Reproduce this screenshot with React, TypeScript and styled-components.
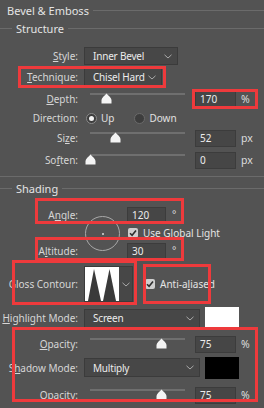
import styled, { createGlobalStyle } from "styled-components";

const GlobalStyle = createGlobalStyle`
  html, body {
    margin: 0;
    padding: 0;
    background: #535353;
  }

  body {
    font-family: "Noto Sans", "Segoe UI", sans-serif;
    font-size: 10px;
    color: #d6d6d6;
  }
`;

const Panel = styled.div`
  position: relative;
  width: 264px;
  height: 408px;
  overflow: hidden;
  background: #535353;
`;

const Legend = styled.div<{ $indent: number; $h: number }>`
  display: flex;
  align-items: center;
  gap: 4px;
  height: ${(p) => p.$h}px;
  padding-left: ${(p) => (p.$indent ? 0 : 7)}px;
  font-size: 11px;
  color: #e4e4e4;

  &::before {
    content: "";
    display: ${(p) => (p.$indent ? "block" : "none")};
    width: ${(p) => p.$indent}px;
    height: 1px;
    background: #6b6b6b;
  }

  &::after {
    content: "";
    flex: 1;
    height: 1px;
    background: #6b6b6b;
  }
`;

const Group = styled.div`
  padding-bottom: 6px;
  border-bottom: 1px solid #6b6b6b;
`;

const Row = styled.div<{ $h: number; $mt?: number }>`
  display: grid;
  grid-template-columns: 78px auto;
  column-gap: 6px;
  align-items: center;
  height: ${(p) => p.$h}px;
  margin-top: ${(p) => p.$mt ?? 0}px;
`;

const Label = styled.span<{ $row?: number }>`
  grid-column: 1;
  grid-row: ${(p) => p.$row ?? "auto"};
  text-align: right;
  white-space: nowrap;
`;

const U = styled.span`
  text-decoration: underline;
  text-underline-offset: 1px;
`;

const Controls = styled.div`
  display: flex;
  align-items: center;
`;

const Select = styled.div<{ $w: number; $h?: number }>`
  box-sizing: border-box;
  display: flex;
  align-items: center;
  justify-content: space-between;
  width: ${(p) => p.$w}px;
  height: ${(p) => p.$h ?? 18}px;
  padding: 0 5px 0 8px;
  background: #474747;
  border: 1px solid #3b3b3b;
  color: #ececec;
  font-size: 10px;
  letter-spacing: -0.2px;
  white-space: nowrap;
`;

const Field = styled.div<{ $w?: number; $col?: number; $row?: number }>`
  box-sizing: border-box;
  display: flex;
  align-items: center;
  grid-column: ${(p) => p.$col ?? "auto"};
  grid-row: ${(p) => p.$row ?? "auto"};
  width: ${(p) => p.$w ?? 41}px;
  height: 17px;
  padding-left: 4px;
  background: #464646;
  border: 1px solid #3c3c3c;
  color: #ececec;
  font-size: 10px;
`;

const Unit = styled.span`
  margin-left: 5px;
  font-size: 10.5px;
  color: #dcdcdc;
`;

const SliderBox = styled.div`
  position: relative;
  width: 97px;
  height: 20px;
  margin-left: 4px;
  margin-right: 10px;
`;

const Track = styled.div`
  position: absolute;
  left: 2px;
  right: 0;
  top: 4px;
  height: 2px;
  background: #6f6f6f;
`;

const ThumbIcon = styled.svg`
  position: absolute;
  top: 4px;
  width: 11px;
  height: 11px;
`;

const Swatch = styled.div<{ $color: string }>`
  width: 34px;
  height: 22px;
  margin-left: 5px;
  background: ${(p) => p.$color};
`;

const RadioGroup = styled.div`
  display: flex;
  align-items: center;
  margin-left: 2px;
  font-size: 10px;
  color: #e0e0e0;
`;

const Radio = styled.span<{ $on?: boolean }>`
  box-sizing: border-box;
  display: inline-flex;
  align-items: center;
  justify-content: center;
  width: 11px;
  height: 11px;
  margin-right: 4px;
  border-radius: 50%;
  background: #3d3d3d;
  border: 1px solid ${(p) => (p.$on ? "#8a8a8a" : "#6a6a6a")};

  &::after {
    content: "";
    display: ${(p) => (p.$on ? "block" : "none")};
    width: 5px;
    height: 5px;
    border-radius: 50%;
    background: #f2f2f2;
  }
`;

const RadioText = styled.span<{ $gap?: number }>`
  margin-right: ${(p) => p.$gap ?? 0}px;
`;

const AngleGrid = styled.div`
  display: grid;
  grid-template-columns: 78px 37px 39px auto;
  grid-template-rows: 18px 18px 18px;
  column-gap: 6px;
  align-items: center;
  margin-top: 7px;
`;

const Dial = styled.div`
  grid-column: 2;
  grid-row: 1 / 4;
  position: relative;
  box-sizing: border-box;
  width: 35px;
  height: 35px;
  justify-self: center;
  border: 1px solid #a9a9a9;
  border-radius: 50%;

  &::after {
    content: "";
    position: absolute;
    left: 16px;
    top: 16px;
    width: 2px;
    height: 2px;
    background: #b8b8b8;
  }
`;

const Degree = styled.span<{ $row?: number }>`
  grid-column: 4;
  grid-row: ${(p) => p.$row ?? "auto"};
  align-self: start;
  margin-top: 1px;
  font-size: 10px;
  color: #dcdcdc;
`;

const CheckLine = styled.label<{ $ml?: number }>`
  display: flex;
  align-items: center;
  gap: 5px;
  margin-left: ${(p) => p.$ml ?? 0}px;
  font-size: 10px;
  color: #e4e4e4;
  white-space: nowrap;
`;

const GlobalLight = styled(CheckLine)`
  grid-column: 3 / 5;
  grid-row: 2;
`;

const Box = styled.span`
  display: inline-flex;
  align-items: center;
  justify-content: center;
  width: 10px;
  height: 10px;
  border-radius: 2px;
  background: #cfcfcf;
`;

const ContourPicker = styled.div`
  box-sizing: border-box;
  display: flex;
  align-items: center;
  width: 49px;
  height: 36px;
  background: #474747;
  border: 1px solid #3b3b3b;
`;

const ContourThumb = styled.svg`
  width: 34px;
  height: 34px;
  display: block;
`;

const ChevronCell = styled.div`
  flex: 1;
  display: flex;
  justify-content: center;
`;

const Mark = styled.div<{ $x: number; $y: number; $w: number; $h: number }>`
  position: absolute;
  left: ${(p) => p.$x}px;
  top: ${(p) => p.$y}px;
  width: ${(p) => p.$w}px;
  height: ${(p) => p.$h}px;
  box-sizing: border-box;
  border: 3px solid #ee3a3c;
  pointer-events: none;
`;

const Chevron = () => (
  <svg width="8" height="5" viewBox="0 0 8 5">
    <polyline points="0.5,0.8 4,4 7.5,0.8" fill="none" stroke="#a8a8a8" strokeWidth="1" />
  </svg>
);

const Check = () => (
  <svg width="8" height="8" viewBox="0 0 8 8">
    <polyline points="1,4.2 3.1,6.3 7,1.6" fill="none" stroke="#2e2e2e" strokeWidth="1.6" />
  </svg>
);

const Slider = ({ pct }: { pct: number }) => (
  <SliderBox>
    <Track />
    <ThumbIcon viewBox="0 0 11 11" style={{ left: `${(pct / 100) * 95 - 3.5}px` }}>
      <path d="M0.5 10.5 V7 C0.5 5 3.5 3 5.5 0.6 C7.5 3 10.5 5 10.5 7 V10.5 Z" fill="#f4f4f4" />
    </ThumbIcon>
  </SliderBox>
);

const SliderRow = ({
  label,
  pct,
  value,
  unit,
  h = 20,
  mt,
}: {
  label: React.ReactNode;
  pct: number;
  value: string;
  unit: string;
  h?: number;
  mt?: number;
}) => (
  <Row $h={h} $mt={mt}>
    <Label>{label}</Label>
    <Controls>
      <Slider pct={pct} />
      <Field>{value}</Field>
      <Unit>{unit}</Unit>
    </Controls>
  </Row>
);

const App = () => {
  return (
    <Panel>
      <GlobalStyle />
      <Legend $indent={0} $h={20}>Bevel &amp; Emboss</Legend>
      <Group>
        <Legend $indent={12} $h={16}>Structure</Legend>
        <Row $h={20} $mt={10}>
          <Label>
            <U>S</U>tyle:
          </Label>
          <Select $w={94}>
            Inner Bevel
            <Chevron />
          </Select>
        </Row>
        <Row $h={20} $mt={1}>
          <Label>
            <U>T</U>echnique:
          </Label>
          <Select $w={78}>
            Chisel Hard
            <Chevron />
          </Select>
        </Row>
        <SliderRow label={<><U>D</U>epth:</>} pct={17} value="170" unit="%" mt={2} />
        <Row $h={18}>
          <Label>Direction:</Label>
          <RadioGroup>
            <Radio $on />
            <RadioText $gap={20}>Up</RadioText>
            <Radio />
            <RadioText>Down</RadioText>
          </RadioGroup>
        </Row>
        <SliderRow label={<>Si<U>z</U>e:</>} pct={27} value="52" unit="px" mt={1} />
        <SliderRow label={<>So<U>f</U>ten:</>} pct={0} value="0" unit="px" mt={2} />
      </Group>

      <Legend $indent={12} $h={22}>Shading</Legend>
      <AngleGrid>
        <Label $row={1}>
          A<U>n</U>gle:
        </Label>
        <Dial />
        <Field $w={39} $col={3} $row={1}>
          120
        </Field>
        <Degree $row={1}>°</Degree>
        <GlobalLight $ml={1}>
          <Box>
            <Check />
          </Box>
          <span>Use Global Light</span>
        </GlobalLight>
        <Label $row={3}>
          A<U>l</U>titude:
        </Label>
        <Field $w={39} $col={3} $row={3}>
          30
        </Field>
        <Degree $row={3}>°</Degree>
      </AngleGrid>

      <Row $h={36} $mt={6}>
        <Label>Gloss Contour:</Label>
        <Controls>
          <ContourPicker>
            <ContourThumb viewBox="0 0 34 34">
              <rect width="34" height="34" fill="#ffffff" />
              <polygon points="3,34 9,2 16,34" fill="#3a3a3a" />
              <polygon points="18,34 24.5,2 31,34" fill="#3a3a3a" />
            </ContourThumb>
            <ChevronCell>
              <Chevron />
            </ChevronCell>
          </ContourPicker>
          <CheckLine $ml={12}>
            <Box>
              <Check />
            </Box>
            <span>
              Anti-a<U>l</U>iased
            </span>
          </CheckLine>
        </Controls>
      </Row>

      <Row $h={22} $mt={5}>
        <Label>
          <U>H</U>ighlight Mode:
        </Label>
        <Controls>
          <Select $w={116} $h={19}>
            Screen
            <Chevron />
          </Select>
          <Swatch $color="#ffffff" />
        </Controls>
      </Row>
      <SliderRow label={<><U>O</U>pacity:</>} pct={75} value="75" unit="%" h={18} mt={5} />
      <Row $h={23} $mt={4}>
        <Label>
          S<U>h</U>adow Mode:
        </Label>
        <Controls>
          <Select $w={116} $h={19}>
            Multiply
            <Chevron />
          </Select>
          <Swatch $color="#000000" />
        </Controls>
      </Row>
      <SliderRow label={<>Opa<U>c</U>ity:</>} pct={75} value="75" unit="%" h={18} mt={6} />

      <Mark $x={18} $y={66} $w={148} $h={22} />
      <Mark $x={192} $y={89} $w={66} $h={20} />
      <Mark $x={35} $y={198} $w={149} $h={26} />
      <Mark $x={35} $y={237} $w={149} $h={24} />
      <Mark $x={12} $y={260} $w={125} $h={45} />
      <Mark $x={143} $y={264} $w={68} $h={40} />
      <Mark $x={12} $y={327} $w={246} $h={75} />
    </Panel>
  );
};

export default App;
